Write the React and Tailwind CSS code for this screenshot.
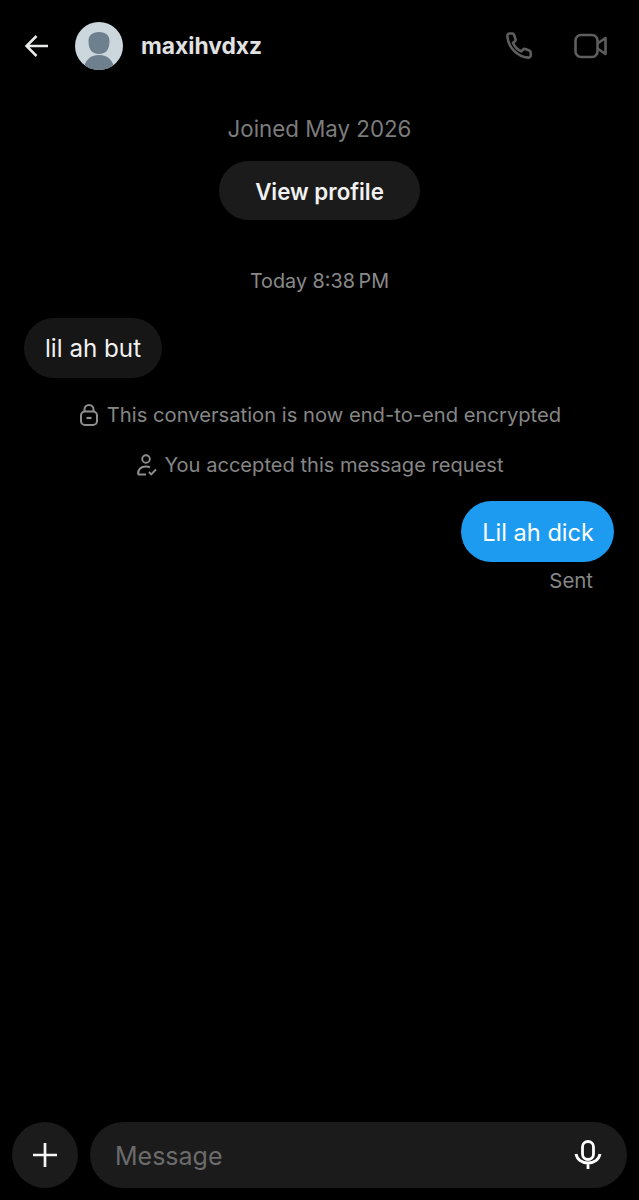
const font = "[font-family:Inter,'Noto_Sans',sans-serif]"

function Avatar() {
  return (
    <svg width="48" height="48" viewBox="0 0 48 48" className="shrink-0">
      <defs>
        <clipPath id="avatar-clip">
          <circle cx="24" cy="24" r="24" />
        </clipPath>
      </defs>
      <g clipPath="url(#avatar-clip)">
        <rect width="48" height="48" fill="#ccd6dd" />
        <path d="M24 10c-7 0-10.500 3.500-10.500 9 0 3.500.6 6.500 1.800 8.500 1.500 2.800 4.700 4.500 8.700 4.500s7.200-1.700 8.700-4.500c1.200-2 1.800-5 1.800-8.500 0-5.500-3.500-9-10.500-9z" fill="#6e7f8d" />
        <path d="M9 48c0-9 6-15 15-15s15 6 15 15z" fill="#6e7f8d" />
      </g>
    </svg>
  )
}

function Header() {
  return (
    <header className="flex h-[92px] shrink-0 items-center pl-6 pr-8">
      <svg width="25" height="24" viewBox="0 0 25 24" fill="none" stroke="#e7e9ea" strokeWidth="2.500" className="shrink-0">
        <path d="M24 12H2.500M12.500 2 2.500 12l10 10" />
      </svg>
      <div className="ml-[26px]"><Avatar /></div>
      <span className="ml-[18px] text-[22.800px] font-bold text-[#e1e1e1]">maxihvdxz</span>
      <svg width="30" height="30" viewBox="0 0 30 30" fill="none" stroke="#5e5e5e" strokeWidth="2.600" className="ml-auto shrink-0 translate-x-[1px]">
        <path d="M4.500 2.500h2.700c1 0 1.600.5 1.900 1.400l1.400 4.200c.3.800 0 1.600-.6 2.100l-1.900 1.500c1.500 4 4.500 7 8.400 8.700l1.700-1.900c.6-.6 1.400-.8 2.200-.5l4 1.500c.9.300 1.400 1 1.400 1.900v2.800c0 1.500-1 2.500-2.500 2.400C12 25.800 3 16 2.400 5c-.1-1.400.8-2.500 2.100-2.500z" strokeLinejoin="round" />
      </svg>
      <svg width="33" height="26" viewBox="0 0 33 26" fill="none" stroke="#5e5e5e" strokeWidth="2.600" strokeLinejoin="round" className="ml-[40px] shrink-0">
        <rect x="1.500" y="2" width="22" height="22" rx="5.500" />
        <path d="M23.500 10.500 31.500 5v16l-8-5.500" />
      </svg>
    </header>
  )
}

function LockIcon() {
  return (
    <svg width="18" height="22" viewBox="0 0 18 22" fill="none" stroke="#8f8f8f" strokeWidth="2" className="shrink-0">
      <rect x="1" y="7.500" width="16" height="13.500" rx="4" />
      <path d="M4.500 7.500V5.500a4.500 4.500 0 0 1 9 0v2" />
      <path d="M6.500 14h5" strokeWidth="2.200" />
    </svg>
  )
}

function PersonCheckIcon() {
  return (
    <svg width="20" height="22" viewBox="0 0 20 22" fill="none" stroke="#8f8f8f" strokeWidth="1.900" className="shrink-0">
      <circle cx="9" cy="5" r="3.800" />
      <path d="M1 20.500c0-4.500 2.500-8 8-8 1.500 0 3 .3 4 1M1 20.500h8" />
      <path d="m12 18 2.200 2.300L19 15.500" />
    </svg>
  )
}

function Composer() {
  return (
    <div className="flex items-center gap-[12px] px-3 pb-3">
      <button type="button" className="flex h-[66px] w-[66px] shrink-0 items-center justify-center rounded-full bg-[#1b1b1b]">
        <svg width="26" height="26" viewBox="0 0 26 26" stroke="#f5f5f5" strokeWidth="2.700">
          <path d="M13 1v24M1 13h24" />
        </svg>
      </button>
      <div className="flex h-[66px] flex-1 items-center justify-between rounded-full bg-[#1b1b1b] pl-[25px] pr-[25px]">
        <span className="pt-[3px] text-[25px] text-[#6b6b6b]">Message</span>
        <svg width="28" height="30" viewBox="0 0 28 30" fill="none" stroke="#fff" strokeWidth="2.800" className="shrink-0">
          <rect x="8.500" y="1.500" width="11" height="18" rx="5.500" />
          <path d="M2 14c1 5.500 6 9 12 9s11-3.500 12-9M14 23v6" />
        </svg>
      </div>
    </div>
  )
}

export default function App() {
  return (
    <div className={`flex h-[1200px] flex-col bg-black ${font}`}>
      <Header />

      <main className="flex flex-1 flex-col">
        <p className="mt-[23px] text-center text-[22.300px] leading-[28px] text-[#7c7c7c]">Joined May 2026</p>
        <button type="button" className="mt-[18px] h-[59px] w-[201px] self-center rounded-full bg-[#1b1b1b] pt-[2px] text-[22.300px] font-semibold text-[#f1f1f1]">
          View profile
        </button>

        <p className="mt-[47px] text-center text-[19.800px] leading-[28px] text-[#8a8a8a]">Today 8:38{'\u2009'}PM</p>

        <div className="ml-6 mt-[23px] flex h-[60px] w-fit items-center rounded-full bg-[#161616] px-[21px] pt-[2px] text-[24.200px] text-[#f1f1f1]">
          lil ah but
        </div>

        <div className="mt-6 flex translate-x-[1px] items-center justify-center gap-[9px] text-[20.200px] leading-[26px] text-[#868686]">
          <LockIcon />
          <span>This conversation is now end-to-end encrypted</span>
        </div>
        <div className="mt-6 flex translate-x-[1px] items-center justify-center gap-[7px] text-[20.100px] leading-[26px] text-[#868686]">
          <PersonCheckIcon />
          <span>You accepted this message request</span>
        </div>

        <div className="mr-[25px] mt-[23px] flex h-[61px] w-fit items-center self-end rounded-full bg-[#1d9bf0] pb-0 pl-[21px] pr-[20px] pt-[3px] text-[23.600px] text-white">
          Lil ah dick
        </div>
        <p className="mr-[46px] mt-[6px] self-end text-[20.400px] leading-[26px] text-[#868686]">Sent</p>
      </main>

      <Composer />
    </div>
  )
}
